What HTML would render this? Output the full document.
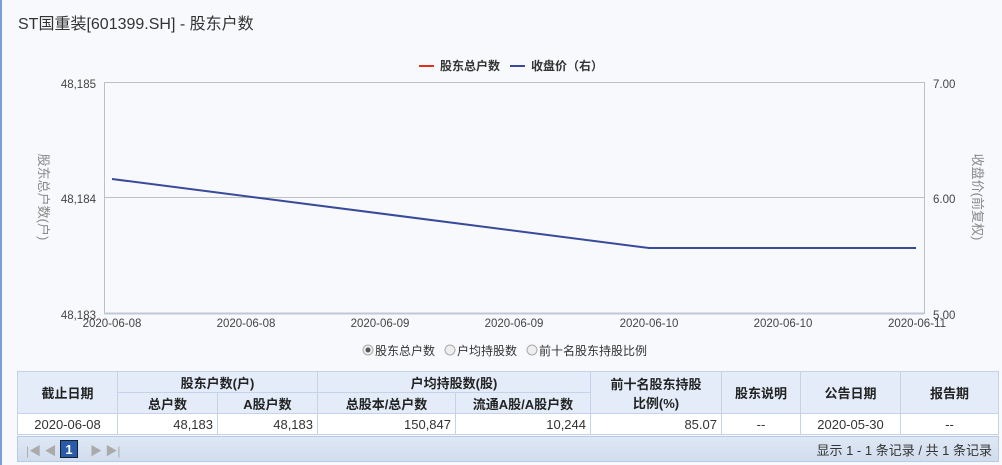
<!DOCTYPE html>
<html><head><meta charset="utf-8"><style>
body{margin:0;width:1002px;height:465px;background:#f8f9fc;font-family:"Liberation Sans","Noto Sans CJK SC",sans-serif;position:relative;overflow:hidden;color:#333}
.lb{position:absolute;left:0;top:0;width:2px;height:465px;background:#7a9fd6}
.title{position:absolute;left:18px;top:10px;font-size:16px;color:#333}
table{position:absolute;left:17px;top:371px;border-collapse:collapse;font-size:13px;width:982px}
td,th{border:1px solid #c5d3e8;padding:0 4px;height:21px;box-sizing:border-box}
th{background:#e3ecf8;font-weight:bold;color:#222;text-align:center}
td{background:#fff;text-align:right}
.pager{position:absolute;left:17px;top:436px;width:982px;height:26px;background:linear-gradient(#dfe8f4,#d0ddee);border:1px solid #b8cbe6;box-sizing:border-box;font-size:13px}
</style></head><body>
<div class="lb"></div>
<div class="title">ST国重装[601399.SH] - 股东户数</div>
<svg width="1002" height="370" style="position:absolute;left:0;top:0" font-family="Liberation Sans,Noto Sans CJK SC,sans-serif">
<line x1="419" y1="66" x2="434" y2="66" stroke="#e0301e" stroke-width="2"/>
<text x="440" y="70" font-size="12" fill="#333" font-weight="bold">股东总户数</text>
<line x1="510" y1="66" x2="525" y2="66" stroke="#3a4a9a" stroke-width="2"/>
<text x="531" y="70" font-size="12" fill="#333" font-weight="bold">收盘价（右）</text>
<rect x="104.5" y="82.5" width="820" height="231" fill="none" stroke="#c0c0c0"/>
<line x1="104" y1="197.5" x2="924" y2="197.5" stroke="#c0c0c0"/>
<line x1="104" y1="313.5" x2="924" y2="313.5" stroke="#c0c8d8" stroke-width="2"/>
<polyline points="112,179 649,248 916,248" fill="none" stroke="#3a4a9a" stroke-width="2"/>
<g font-size="11.5" fill="#444" text-anchor="end">
<text x="96" y="88">48,185</text><text x="96" y="203">48,184</text><text x="96" y="319">48,183</text></g>
<g font-size="11.5" fill="#444"><text x="933" y="88">7.00</text><text x="933" y="203">6.00</text><text x="933" y="319">5.00</text></g>
<g font-size="11.5" fill="#444" text-anchor="middle">
<text x="112" y="327">2020-06-08</text><text x="246" y="327">2020-06-08</text><text x="380" y="327">2020-06-09</text><text x="514" y="327">2020-06-09</text><text x="649" y="327">2020-06-10</text><text x="783" y="327">2020-06-10</text><text x="917" y="327">2020-06-11</text></g>
<text transform="translate(39,197) rotate(90)" font-size="13" fill="#888" text-anchor="middle">股东总户数(户)</text>
<text transform="translate(973,197) rotate(90)" font-size="13" fill="#888" text-anchor="middle">收盘价(前复权)</text>
<g font-size="12" fill="#333">
<circle cx="368" cy="350" r="5" fill="#eee" stroke="#aaa"/><circle cx="368" cy="350" r="2.5" fill="#555"/>
<text x="375" y="355">股东总户数</text>
<circle cx="450" cy="350" r="5" fill="#eee" stroke="#aaa"/><text x="457" y="355">户均持股数</text>
<circle cx="532" cy="350" r="5" fill="#eee" stroke="#aaa"/><text x="539" y="355">前十名股东持股比例</text></g>
</svg>
<table>
<colgroup><col style="width:100px"><col style="width:100px"><col style="width:100px"><col style="width:138px"><col style="width:135px"><col style="width:131px"><col style="width:79px"><col style="width:100px"><col></colgroup>
<tr><th rowspan="2">截止日期</th><th colspan="2">股东户数(户)</th><th colspan="2">户均持股数(股)</th><th rowspan="2">前十名股东持股<br>比例(%)</th><th rowspan="2">股东说明</th><th rowspan="2">公告日期</th><th rowspan="2">报告期</th></tr>
<tr><th>总户数</th><th>A股户数</th><th>总股本/总户数</th><th>流通A股/A股户数</th></tr>
<tr><td style="text-align:center">2020-06-08</td><td>48,183</td><td>48,183</td><td>150,847</td><td>10,244</td><td>85.07</td><td style="text-align:center">--</td><td style="text-align:center">2020-05-30</td><td style="text-align:center">--</td></tr>
</table>
<div class="pager">
<span style="position:absolute;left:8px;top:5px;color:#aaa;font-size:12px">|◀ ◀</span>
<span style="position:absolute;left:42px;top:3px;width:18px;height:18px;background:#2a5aa8;border:1px solid #123;color:#fff;font-weight:bold;text-align:center;line-height:18px;box-sizing:border-box">1</span>
<span style="position:absolute;left:72px;top:5px;color:#aaa;font-size:12px">▶ ▶|</span>
<span style="position:absolute;right:6px;top:3px;color:#333">显示 1 - 1 条记录 / 共 1 条记录</span>
</div>
</body></html>
